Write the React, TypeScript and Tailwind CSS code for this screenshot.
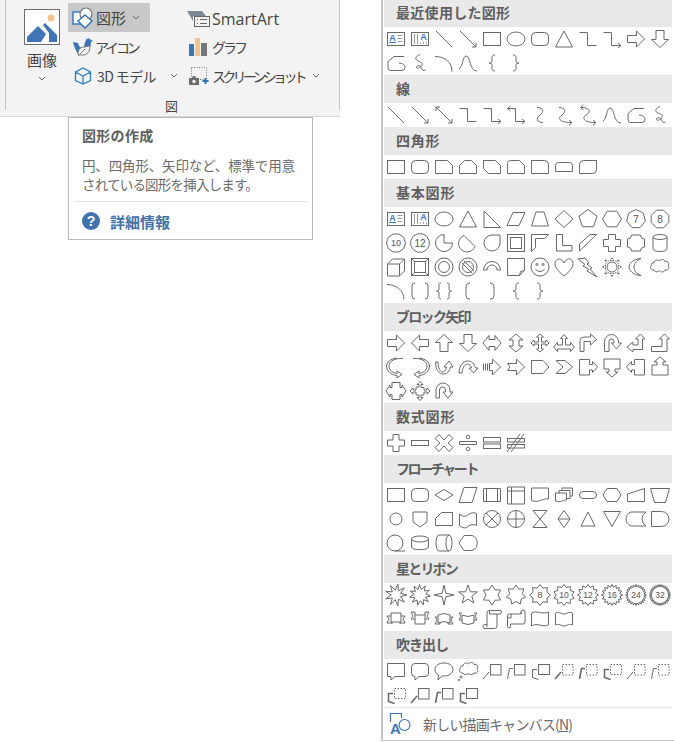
import React from 'react';

const JP = "font-['Noto_Sans_CJK_JP',sans-serif]";

// regular polygon / star outlines for the shape gallery
const regular = (n: number, rx: number, ry = rx, rot = -90) => {
  const pts: string[] = [];
  for (let i = 0; i < n; i++) {
    const a = ((rot + (360 / n) * i) * Math.PI) / 180;
    pts.push(`${(12 + rx * Math.cos(a)).toFixed(1)} ${(12 + ry * Math.sin(a)).toFixed(1)}`);
  }
  return 'M' + pts.join('L') + 'z';
};
const starPath = (n: number, R: number, r: number, rot = -90) => {
  const pts: string[] = [];
  for (let i = 0; i < n * 2; i++) {
    const a = ((rot + (180 / n) * i) * Math.PI) / 180;
    const k = i % 2 === 0 ? R : r;
    pts.push(`${(12 + k * Math.cos(a)).toFixed(1)} ${(12 + k * Math.sin(a)).toFixed(1)}`);
  }
  return 'M' + pts.join('L') + 'z';
};

const Label = ({ t, size = 10, y = 15.5 }: { t: string; size?: number; y?: number }) => (
  <text x="12" y={y} textAnchor="middle" fontSize={size} fill="#555" stroke="none" fontFamily="Liberation Sans">
    {t}
  </text>
);

const lineCallout = (kind: number, dashed: boolean, bar = false) => {
  const dash = dashed ? '1.5 1.5' : undefined;
  if (kind === 3) {
    return (
      <>
        <rect x="10.5" y="5.5" width="11" height="10" strokeDasharray={dash} />
        <path d="M9 10.5H4.5v8l6 2" strokeWidth={bar ? 1.6 : 1} />
      </>
    );
  }
  return (
    <>
      <rect x="10.5" y="5.5" width="10.5" height="10.5" strokeDasharray={dash} />
      {kind === 1 ? (
        <path d="M9 13L3 20" strokeWidth={bar ? 1.6 : 1} />
      ) : (
        <path d="M9 9.5H5.5L3.5 20" strokeWidth={bar ? 1.6 : 1} />
      )}
    </>
  );
};

const p = (d: string) => <path d={d} />;

const shapes: Record<string, React.ReactNode> = {
  textbox: (
    <>
      <rect x="3.5" y="5.5" width="17" height="13" />
      <text x="8.5" y="14" textAnchor="middle" fontSize="9" fontWeight="700" fill="#3a76c4" stroke="none" fontFamily="Liberation Sans">A</text>
      <path d="M5 15.5h7" stroke="#3a76c4" />
      <path d="M13.5 8.5h5M13.5 11.5h5M13.5 14.5h5M5 16.5h0" stroke="#9a9a9a" />
    </>
  ),
  vtextbox: (
    <>
      <rect x="3.5" y="5.5" width="17" height="13" />
      <path d="M6.5 7v10M9.5 7v10" stroke="#9a9a9a" />
      <text x="15.5" y="13" textAnchor="middle" fontSize="9" fontWeight="700" fill="#3a76c4" stroke="none" fontFamily="Liberation Sans">A</text>
      <path d="M12.5 15.5v1.5M15.5 15v2M18.5 15.5v1.5" stroke="#9a9a9a" />
    </>
  ),
  line: p('M4 4L20 20'),
  arrowLine: p('M4 4L20 20M20 16v4h-4'),
  doubleArrow: p('M4 4L20 20M4 8V4h4M20 16v4h-4'),
  rect: <rect x="3.5" y="5.5" width="17" height="13" />,
  ellipse: <ellipse cx="12" cy="12" rx="9" ry="7" />,
  roundRect: <rect x="3.5" y="5.5" width="17" height="13" rx="4" />,
  triangle: p('M12 4L20.5 20H3.5z'),
  elbow: p('M3.5 5.5h8v13h9'),
  elbowArrow: p('M3.5 5.5h8v13h9M18 16l3 2.5-3 2.5'),
  elbowDouble: p('M3.5 5.5h8v13h9M6.5 3l-3 2.5 3 2.5M18 16l3 2.5-3 2.5'),
  curvy: p('M9 4.5c7 0 7 5 3 7.5-4 2.5-4 7.5 3 7.5'),
  curveArrow: p('M7 4.5c7 0 7 5 3 7.5-4 2.5-4 7.5 9 7.5M17 17l3 2.5-3 2.5'),
  curveDouble: p('M5 4.5c10 0 10 5 5 7.5-4 2.5-3 7.5 9 7.5M7.5 2l-3 2.5 3 2.5M17 17l3 2.5-3 2.5'),
  freeform: p('M20 5.5H10L4 10.5v6.5q0 2.5 2.5 2.5H18q3 0 3-3 0-4-6-4.5'),
  scribble: p('M12 3.5C8 5 6 8 10 10c4 1.5 6 3 2.5 6-2 1.5-4 2-4 0s4-2 5 1c.5 2 2 3 4 2'),
  curve: p('M3 5.5c9 0 17 5 17 15'),
  curveS: p('M3 18C7 16 6.5 5 10 5c5 0 3 15 11 15'),
  lbrace: p('M15 4c-3.5 0-3 2-3 5 0 2-.5 3-3 3 2.5 0 3 1 3 3 0 3-.5 5 3 5'),
  rbrace: p('M9 4c3.5 0 3 2 3 5 0 2 .5 3 3 3-2.5 0-3 1-3 3 0 3 .5 5-3 5'),

  snip1: p('M3.5 5.5h12l5 5v8h-17z'),
  snip2: p('M8.5 5.5h7l5 5v8h-17v-8z'),
  snipDiag: p('M3.5 5.5h12l5 5v8h-12l-5-5z'),
  snipRound: p('M6.5 5.5h9l5 5v8h-17v-10q0-3 3-3z'),
  round1: p('M3.5 5.5h13q4 0 4 4v9h-17z'),
  round2: p('M6.5 7.5h11q3 0 3 3v6h-17v-6q0-3 3-3z'),
  roundDiag: p('M7.5 5.5h13v9q0 4-4 4h-13v-9q0-4 4-4z'),

  rtTriangle: p('M4 4l16.5 16.5H4z'),
  parallelogram: p('M9 5.5h12l-6 13H3z'),
  trapezoid: p('M8 5h8l4.5 14h-17z'),
  diamond: p('M12 3.5l9 8.5-9 8.5-9-8.5z'),
  pentagon: p(regular(5, 9.5)),
  hexagon: p(regular(6, 9.5, 9, 0)),
  hept: <>{p(regular(7, 9.5))}<Label t="7" /></>,
  oct: <>{p(regular(8, 9.5, 9.5, -67.5))}<Label t="8" /></>,
  dec: <>{p(regular(10, 9.5, 9.5, -72))}<Label t="10" size={9} y={15} /></>,
  dodec: <>{p(regular(12, 9.5, 9.5, -75))}<Label t="12" size={10} /></>,
  pie: p('M12 3.5a8.5 8.5 0 1 0 8.5 8.5H12z'),
  chord: p('M8 4.5a8.5 8.5 0 1 0 11 11z'),
  teardrop: p('M20 4v8a8 8 0 1 1-8-8z'),
  frame: <><rect x="3.5" y="3.5" width="17" height="17" /><rect x="6.5" y="6.5" width="11" height="11" /></>,
  halfFrame: p('M3.5 3.5h17l-4 4h-9v9l-4 4z'),
  lShape: p('M4.5 3.5h6v11h9.5v5.5H4.5z'),
  diagStripe: p('M3.5 13L14 3.5h6.5L3.5 20z'),
  plus: p('M8.5 3.5h7v5h5v7h-5v5h-7v-5h-5v-7h5z'),
  plaque: p('M7.5 4h9q0 4 4 4v8q-4 0-4 4h-9q0-4-4-4V8q4 0 4-4z'),
  can: <><ellipse cx="12" cy="6" rx="7" ry="2.5" /><path d="M5 6v12c0 3.3 14 3.3 14 0V6" /></>,
  cube: p('M3.5 9l5-5h12v12l-5 5h-12zM3.5 9h12v12M15.5 9l5-5'),
  bevel: <><rect x="3.5" y="3.5" width="17" height="17" /><rect x="6.5" y="6.5" width="11" height="11" /><path d="M3.5 3.5l3 3M20.5 3.5l-3 3M3.5 20.5l3-3M20.5 20.5l-3-3" /></>,
  donut: <><circle cx="12" cy="12" r="9" /><circle cx="12" cy="12" r="5.5" /></>,
  noSymbol: <><circle cx="12" cy="12" r="9" /><circle cx="12" cy="12" r="5.5" /><path d="M8 6l10 10M6 8l10 10" /></>,
  blockArc: p('M3.5 15a8.5 8.5 0 0 1 17 0h-3.5a5 5 0 0 0-10 0z'),
  folded: p('M3.5 3.5h17v12l-5 5h-12zM15.5 20.5l1-4 4-1'),
  smiley: <><circle cx="12" cy="12" r="9" /><circle cx="9" cy="9.5" r="1" /><circle cx="15" cy="9.5" r="1" /><path d="M7.5 14.5q4.5 4 9 0" /></>,
  heart: p('M12 21C6 16 3 13 3 8.5 3 5 7 3 9 4.5c1.5 1 2.5 2 3 3.5.5-1.5 1.5-2.5 3-3.5 2-1.5 6-.5 6 4 0 4.5-3 7.5-9 12.5z'),
  lightning: p('M2 4l7-1 4 5-2 1 5 4-2 1 7 8-10-6 2-1.5-6-3.5 2-1.5z'),
  sun: <><circle cx="12" cy="12" r="5" /><path d="M12 2.5l2 3h-4zM12 21.5l2-3h-4zM2.5 12l3 2v-4zM21.5 12l-3 2v-4zM5 5l3.5 1-2.5 2.5zM19 5l-3.5 1 2.5 2.5zM5 19l3.5-1-2.5-2.5zM19 19l-3.5-1 2.5-2.5z" strokeDasharray="2 1" /></>,
  moon: p('M17 3.5c-9 .5-12 6-12 8.5s3 8 12 8.5c-5-2-7-5-7-8.5s2-6.5 7-8.5z'),
  cloud: p('M6 8c0-3 4-4 5.5-2 1-2 5-2 5.5.5 3-.5 5 2 3 4.500 2 2 0 5-3 4-1 2.500-4 2.500-5.500.500-1.500 2-5 1.500-5.500-.500-3 .500-4.500-3-2.500-4.500C2.500 9 4 7.500 6 8z'),
  arc: p('M3 5.5c9 0 17 6 17 15'),
  bracketPair: p('M7 4q-3 0-3 3v10q0 3 3 3M17 4q3 0 3 3v10q0 3-3 3'),
  bracePair: p('M9 4c-3 0-2 2-2 5 0 2-.5 3-2.5 3 2 0 2.5 1 2.5 3 0 3-1 5 2 5M15 4c3 0 2 2 2 5 0 2 .5 3 2.5 3-2 0-2.5 1-2.5 3 0 3 1 5-2 5'),
  lbracket: p('M14 4q-4 0-4 3v10q0 3 4 3'),
  rbracket: p('M10 4q4 0 4 3v10q0 3-4 3'),

  right: p('M3.5 8.5h9V4l8 8-8 8v-4.5h-9z'),
  left: p('M20.5 8.5h-9V4l-8 8 8 8v-4.5h9z'),
  up: p('M8 20.5v-9H3.5l8.5-8 8.5 8H16v9z'),
  down: p('M8 3.5v9H3.5l8.5 8 8.5-8H16v-9z'),
  leftRight: p('M3 12l6-7.500v4h6v-4l6 7.500-6 7.500v-4H9v4z'),
  upDown: p('M12 3l7 6h-4v6h4l-7 6-7-6h4V9H5z'),
  quad: p('M12 3l3.500 3H13.500v5H18V9l3 3-3 3v-2h-4.500v5h2L12 21l-3.500-3h2v-5H6v2l-3-3 3-3v2h4.500V6h-2z'),
  lrUp: p('M12 3.5l3.5 4H13.5v6.5h5V11.5l4 4.5-4 4.5V18h-13v2.500l-4-4.500 4-4.500V14h5V7.500H8.500z'),
  bent: p('M4 20.5V9.5q0-3.500 4-3.500h6.500V3l6 5.500-6 5.500v-3.500H8v10z'),
  uturn: p('M4.5 20.5V10.500a7 7 0 0 1 14 0v1.500H21.500l-5 6-5-6h2.500v-1.500a2.500 2.500 0 0 0-5 0v10z'),
  leftUp: p('M16.5 3l4.500 5h-2.500v10.500H9V21l-6-5 6-5v3h5V8h-2.500z'),
  bentUp: p('M3.5 15.5H14V8h-2.500L16.500 3l5 5H19v12.500H3.500z'),
  curvedRight: p('M19 3.500C11 3 5 6 5 11c0 4 3 6.500 8 7.500V16l5 3.500-5 3.500v-2.500C7 20 2.500 16 2.500 11 2.500 7 7 3.500 13 3'),
  curvedLeft: p('M5 3.500C13 3 19 6 19 11c0 4-3 6.500-8 7.500V16l-5 3.500 5 3.500v-2.500c6-.500 10.500-4.500 10.500-9.500C21.500 7 17 3.500 11 3'),
  curvedUp: p('M3.500 7c0 7 3 12 8 12 4 0 6-3 7-7h2.500L17 6l-5 6h2.500c-.500 3-2 5-4 5S6 13 6 7z'),
  curvedDown: p('M3 18C3 11 7 6 12 6c4 0 6.500 3 7.500 7H22l-4.500 5-4.500-5h2.500c-.500-2-2-4-4-4-3 0-5 4-5.500 9z'),
  striped: p('M3.500 8.500v7M5.500 8.500v7M7.500 8.500v7M9.500 8.500h3V4l8 8-8 8v-4.500h-3z'),
  notched: p('M3.500 8.500h9V4l8 8-8 8v-4.500h-9l2.500-3.500z'),
  homePlate: p('M3.500 5.500H15l6 6.500-6 6.500H3.500z'),
  chevron: p('M4 5.500h9l7.500 6.500-7.500 6.500H4l7-6.500z'),
  rightCallout: p('M3.500 4.500h10v5h3V6.500l5 5.500-5 5.500V15h-3v5H3.500z'),
  downCallout: p('M4 4h16v10h-5v3h3l-6 5-6-5h3v-3H4z'),
  leftCallout: p('M20.500 4.500h-10v5h-3V6.500l-5 5.500 5 5.500V15h3v5h10z'),
  upCallout: p('M4 20h16V10h-5V7h3l-6-5-6 5h3v3H4z'),
  lrCallout: p('M8 3.500h8v5h2V6l4 6-4 6v-2.500h-2v5H8v-5H6V18l-4-6 4-6v2.500h2z'),
  quadCallout: p('M12 2.500l3 3h-2v3h3v2.500h3V9l3 3-3 3v-2h-3v3h-3v2.500h2L12 21.500 9 18.500h2V16H8v-3H5v2l-3-3 3-3v2h3V8h3V5.500H9z'),
  circular: p('M4 19V11a7 7 0 0 1 14 0v2h3l-5 6-5-6h2.500V11a3 3 0 0 0-6 0v8z'),

  mathPlus: p('M9 3.500h6V9h5.500v6H15v5.500H9V15H3.500V9H9z'),
  mathMinus: <rect x="3.500" y="9.500" width="17" height="5" />,
  mathMul: p('M7 3.500l5 5.500 5-5.500 4 4-5 4.500 5 4.500-4 4-5-5.500-5 5.500-4-4 5-4.500-5-4.500z'),
  mathDiv: <><path d="M3.500 10.500h17v3h-17z" /><circle cx="12" cy="6" r="1.800" /><circle cx="12" cy="18" r="1.800" /></>,
  mathEq: <><rect x="3.500" y="6.500" width="17" height="4.500" /><rect x="3.500" y="13" width="17" height="4.500" /></>,
  mathNe: <><rect x="3.500" y="7.500" width="17" height="3.500" /><rect x="3.500" y="13.500" width="17" height="3.500" /><path d="M3 21L16 3M7 21L20 3" /></>,

  diamondWide: p('M3 12l9-5.500 9 5.500-9 5.500z'),
  data: p('M8 4.500h13l-5 15H3z'),
  predefined: p('M3.500 5.500h17v13h-17zM6.500 5.500v13M17.500 5.500v13'),
  internal: p('M3.500 4h17v17h-17zM3.500 8h17M7.500 4v17'),
  document: p('M3.500 5h17v11c-6-1-10 4.500-17 1.500z'),
  multidoc: p('M3.500 10h11v7c-4 0-6 3-11 1zM7 10V7.500h11v8h-3.500M10 7.500V5h10.500v8H18'),
  terminator: <rect x="3.500" y="8.500" width="17" height="7" rx="3.500" />,
  preparation: p('M7 5.500h10l4 6.500-4 6.500H7l-4-6.500z'),
  manualInput: p('M3.500 11l17-5.500v13h-17z'),
  manualOp: p('M2.500 5.500h19l-4 14h-11z'),
  connector: <circle cx="12" cy="12" r="6" />,
  offpage: p('M5 5h14v10l-7 5-7-5z'),
  card: p('M9.500 5.500h11v13h-17v-7z'),
  tape: p('M3.500 7c4 3 6 3 8.500 1s5-3 8.500-1.500v12c-3-1.500-6-1-8.500 1s-5 2-8.500-1z'),
  summing: <><circle cx="12" cy="12" r="8.500" /><path d="M6 6l12 12M18 6L6 18" /></>,
  orShape: <><circle cx="12" cy="12" r="8.500" /><path d="M12 3.500v17M3.500 12h17" /></>,
  collate: p('M5 3.500h14L5 20.500h14z'),
  sortShape: p('M12 3.500l6 8.500-6 8.500-6-8.500zM6 12h12'),
  extract: p('M12 5l7 14H5z'),
  merge: p('M3.500 4.500h17l-8.500 15z'),
  stored: p('M7 5h15q-4 3-4 7t4 7H7q-5-2-5-7t5-7z'),
  delay: p('M3.500 4.500h10a7.500 7.500 0 0 1 0 15h-10z'),
  sequential: <><circle cx="11" cy="12" r="8" /><path d="M11 20h10" /></>,
  disk: <><ellipse cx="12" cy="8" rx="8.500" ry="3" /><path d="M3.500 8v8c0 3.500 17 3.500 17 0V8" /></>,
  direct: <><path d="M7 4h10c4 0 4 16 0 16H7c-4 0-4-16 0-16z" /><path d="M17 4c-4 0-4 16 0 16" /></>,
  displayShape: p('M8 4.500h8c7 2 7 13 0 15H8L3 12z'),

  exp1: p(starPath(9, 11, 4.800, -80)),
  exp2: p(starPath(11, 10.500, 5.800, -60)),
  star4: p(starPath(4, 10, 2.500)),
  star5: p(starPath(5, 10, 4)),
  star6: p(starPath(6, 10, 6)),
  star7: p(starPath(7, 10, 6.500)),
  star8: <>{p(starPath(8, 10.500, 7.500))}<Label t="8" size={9} y={15} /></>,
  star10: <>{p(starPath(10, 10.500, 7.800))}<Label t="10" size={8.500} y={15} /></>,
  star12: <>{p(starPath(12, 10.500, 7.800))}<Label t="12" size={8.500} y={15} /></>,
  star16: <>{p(starPath(16, 10.500, 7.800))}<Label t="16" size={8.500} y={15} /></>,
  star24: <>{p(starPath(24, 10.500, 8))}<Label t="24" size={8.500} y={15} /></>,
  star32: <>{p(starPath(32, 10.500, 8))}<Label t="32" size={8.500} y={15} /></>,
  ribbonUp: p('M7 6h10v9H7zM7 9H3l2 3-2 4h5M17 9h4l-2 3 2 4h-5M8 15v2M16 15v2'),
  ribbonDown: p('M7 8h10v9H7zM7 5H3l2 4-2 3h4M17 5h4l-2 4 2 3h-4M7 5v3M17 5v3'),
  curveUp: p('M6 8q6-3 12 0v8q-6-3-12 0zM6 10H3l2 3-2 4h5v-2M18 10h3l-2 3 2 4h-5v-2'),
  curveDown: p('M6 8q6 3 12 0v8q-6 3-12 0zM6 6H3l2 3-2 4h3M18 6h3l-2 3 2 4h-3'),
  vscroll: p('M7 20V6q0-2.500 2.500-2.500H20q1.500 0 1.500 1.500T20 7h-3v12q0 2.500-2.500 2.500H5q-2 0-2-2t2-2h2M9.500 3.500V7H17'),
  hscroll: p('M3.500 9q0-2 2-2H17V5q0-2 2-2t2 2v10q0 2-2 2H6.500v2q0 2-1.500 2t-1.500-2zM3.500 9q0 2 2 2h1.500V7M17 5v2'),
  wave: p('M3.500 6c5-3 11 2 17-1v13c-6 3-11-3-17 1z'),
  doubleWave: p('M3.500 6c3-2 5.500 1 8.500 1s5-3 8.500-1v12c-3-2-5.500 1-8.500 1s-5-3-8.500-1z'),

  rectCallout: p('M3.500 4.500h17v13H11l-4 3.500v-3.500H3.500z'),
  roundCallout: p('M7 4.500h10q3.500 0 3.500 3.500v6q0 3.500-3.500 3.500h-6l-4 3.500v-3.500q-3.500 0-3.500-3.500V8q0-3.500 3.500-3.500z'),
  ovalCallout: p('M12 4c5 0 9 2.500 9 6.500S17 17 12 17q-1 0-2-.200L6 21l.500-5C4 15 3 13 3 10.500 3 6.500 7 4 12 4z'),
  cloudCallout: (
    <>
      <path d="M7 7c0-3 4-4 5.500-2 1-2 5-2 5.500.500 3-.500 5 2 3 4.500 2 2 0 5-3 4-1 2-4 2-5.500.500-1.500 1.500-5 1.500-5.500-.500-3 .500-4.500-3-2.500-4.500C3.500 8 5 6.500 7 7z" />
      <circle cx="5" cy="18" r="1" />
      <circle cx="3" cy="21" r=".7" />
    </>
  ),
  lc1: lineCallout(1, false),
  lc2: lineCallout(2, false),
  lc3: lineCallout(3, false),
  dc1: lineCallout(1, true, true),
  dc2: lineCallout(2, true, true),
  dc3: lineCallout(3, true, true),
  dn1: lineCallout(1, true),
  dn2: lineCallout(2, true),
  bc1: lineCallout(1, false, true),
  bc2: lineCallout(2, false, true),
  bc3: lineCallout(3, false, true),
};

const sections = [
  {
    title: '最近使用した図形',
    track: 'tracking-[0.3px]',
    items: ['textbox', 'vtextbox', 'line', 'arrowLine', 'rect', 'ellipse', 'roundRect', 'triangle', 'elbow', 'elbowArrow', 'right', 'down', 'freeform', 'scribble', 'curve', 'curveS', 'lbrace', 'rbrace'],
    first: true,
  },
  {
    title: '線',
    track: 'tracking-[0.5px]',
    items: ['line', 'arrowLine', 'doubleArrow', 'elbow', 'elbowArrow', 'elbowDouble', 'curvy', 'curveArrow', 'curveDouble', 'curveS', 'freeform', 'scribble'],
  },
  {
    title: '四角形',
    track: 'tracking-[0.8px]',
    items: ['rect', 'roundRect', 'snip1', 'snip2', 'snipDiag', 'snipRound', 'round1', 'round2', 'roundDiag'],
  },
  {
    title: '基本図形',
    track: 'tracking-[0.8px]',
    items: [
      'textbox', 'vtextbox', 'ellipse', 'triangle', 'rtTriangle', 'parallelogram', 'trapezoid', 'diamond', 'pentagon', 'hexagon', 'hept', 'oct',
      'dec', 'dodec', 'pie', 'chord', 'teardrop', 'frame', 'halfFrame', 'lShape', 'diagStripe', 'plus', 'plaque', 'can',
      'cube', 'bevel', 'donut', 'noSymbol', 'blockArc', 'folded', 'smiley', 'heart', 'lightning', 'sun', 'moon', 'cloud',
      'arc', 'bracketPair', 'bracePair', 'lbracket', 'rbracket', 'lbrace', 'rbrace',
    ],
  },
  {
    title: 'ブロック矢印',
    track: 'tracking-[-1.7px]',
    items: [
      'right', 'left', 'up', 'down', 'leftRight', 'upDown', 'quad', 'lrUp', 'bent', 'uturn', 'leftUp', 'bentUp',
      'curvedRight', 'curvedLeft', 'curvedUp', 'curvedDown', 'striped', 'notched', 'homePlate', 'chevron', 'rightCallout', 'downCallout', 'leftCallout', 'upCallout',
      'lrCallout', 'quadCallout', 'circular',
    ],
  },
  {
    title: '数式図形',
    track: 'tracking-[0.8px]',
    items: ['mathPlus', 'mathMinus', 'mathMul', 'mathDiv', 'mathEq', 'mathNe'],
  },
  {
    title: 'フローチャート',
    track: 'tracking-[-2.4px]',
    items: [
      'rect', 'roundRect', 'diamondWide', 'data', 'predefined', 'internal', 'document', 'multidoc', 'terminator', 'preparation', 'manualInput', 'manualOp',
      'connector', 'offpage', 'card', 'tape', 'summing', 'orShape', 'collate', 'sortShape', 'extract', 'merge', 'stored', 'delay',
      'sequential', 'disk', 'direct', 'displayShape',
    ],
  },
  {
    title: '星とリボン',
    track: 'tracking-[-1.8px]',
    items: [
      'exp1', 'exp2', 'star4', 'star5', 'star6', 'star7', 'star8', 'star10', 'star12', 'star16', 'star24', 'star32',
      'ribbonUp', 'ribbonDown', 'curveUp', 'curveDown', 'vscroll', 'hscroll', 'wave', 'doubleWave',
    ],
  },
  {
    title: '吹き出し',
    track: 'tracking-[-1px]',
    items: [
      'rectCallout', 'roundCallout', 'ovalCallout', 'cloudCallout', 'lc1', 'lc2', 'lc3', 'dc1', 'dc2', 'dc3', 'dn1', 'dn2',
      'dc3', 'bc1', 'bc2', 'bc3',
    ],
  },
];

function ShapeSection({ title, track, items, first }: { title: string; track: string; items: string[]; first?: boolean }) {
  return (
    <div>
      <div className={`${first ? 'h-[27px]' : 'h-[28px]'} ${track} mr-[2px] bg-[#e9e9e9] pl-3 pb-[3px] flex items-center text-[14px] leading-none font-bold text-[#5e5e5e]`}>
        {title}
      </div>
      <div className="grid grid-cols-[repeat(12,24px)] auto-rows-[24px]">
        {items.map((name, i) => (
          <svg key={i} width="24" height="24" viewBox="0 0 24 24" fill="none" stroke="#696969" strokeWidth="1">
            {shapes[name]}
          </svg>
        ))}
      </div>
    </div>
  );
}

const Chevron = () => (
  <svg width="8" height="5" viewBox="0 0 8 5" fill="none" stroke="#666" strokeWidth="1" className="shrink-0">
    <path d="M1 1l3 3 3-3" />
  </svg>
);

function PictureIcon() {
  return (
    <svg width="36" height="36" viewBox="0 0 36 36" className="shrink-0">
      <rect x=".5" y=".5" width="35" height="35" fill="#fff" stroke="#6b6b6b" />
      <circle cx="27" cy="9" r="3.5" fill="#f2c48d" />
      <path d="M3 33V28L14 17l8 8-5 8z" fill="#3f75b5" />
      <path d="M19 16l2-2 12 12v7h-8V24z" fill="#3f75b5" />
    </svg>
  );
}

function ShapesIcon() {
  return (
    <svg width="22" height="22" viewBox="0 0 22 22" fill="none" className="shrink-0">
      <rect x="1" y="5" width="13" height="12" stroke="#2f73b8" strokeWidth="1.4" fill="#fff" />
      <circle cx="14" cy="7" r="6" fill="#fff" stroke="#777" strokeWidth="1.2" />
      <path d="M13 8l7 6-7 7-7-7z" fill="#fff" stroke="#2f73b8" strokeWidth="1.4" />
    </svg>
  );
}

function BirdIcon() {
  return (
    <svg width="20" height="21" viewBox="0 0 20 21" fill="none" className="shrink-0">
      <path d="M0 6l5 1c1 4 3 5 5 5 2-2 1-5 3-8 1-2 4-2 5 0l2 1-2 1c0 5-2 7-5 8l-4 2H6l-1 2C3 15 1 11 0 6z" fill="#3f75b5" />
      <path d="M5 18c0-5 3-7 6-7l6-1c0 6-3 9-7 9-2 0-4 0-5-1zM5 20l7-7" fill="#f3f3f3" stroke="#777" strokeWidth="1" />
    </svg>
  );
}

function CubeIcon() {
  return (
    <svg width="18" height="18" viewBox="0 0 18 18" fill="none" stroke="#2f7fc4" strokeWidth="1.3" className="shrink-0">
      <path d="M9 1l7.5 4v8.5L9 17l-7.5-3.5V5zM1.5 5L9 9l7.500-4M9 9v8" />
    </svg>
  );
}

function SmartArtIcon() {
  return (
    <svg width="23" height="16" viewBox="0 0 23 16" className="shrink-0">
      <path d="M0 0h15l4 5H6v5z" fill="#7d8a96" />
      <rect x="7.5" y="5.5" width="15" height="10" fill="#f3f3f3" stroke="#666" />
      <path d="M10 8.5h1M13 8.5h7M10 12.5h1M13 12.5h7" stroke="#666" />
    </svg>
  );
}

function ChartIcon() {
  return (
    <svg width="18" height="18" viewBox="0 0 18 18" className="shrink-0">
      <rect x="0" y="6" width="5" height="12" fill="#3f75b5" />
      <rect x="6" y="0" width="5" height="18" fill="#efc490" />
      <rect x="12" y="5" width="6" height="13" fill="#777" />
    </svg>
  );
}

function ScreenshotIcon() {
  return (
    <svg width="20" height="18" viewBox="0 0 20 18" fill="none" className="shrink-0">
      <rect x="2.5" y=".5" width="15" height="12" stroke="#777" strokeDasharray="1 1.5" />
      <rect x="0" y="11" width="10" height="7" fill="#6b6b6b" />
      <path d="M3 11l1-2h2l1 2" fill="#6b6b6b" />
      <circle cx="5" cy="14.5" r="1.8" fill="#f3f3f3" />
      <path d="M16.5 11v6M13.5 14h6" stroke="#2f73b8" strokeWidth="2" />
    </svg>
  );
}

function CanvasIcon() {
  return (
    <svg width="22" height="24" viewBox="0 0 22 24" fill="none" className="shrink-0">
      <path d="M1.5 10V1.500h11V6" stroke="#3f75b5" strokeWidth="1.2" />
      <circle cx="15.5" cy="13" r="5.5" stroke="#3f75b5" strokeWidth="1.2" />
      <text x="6.5" y="22" textAnchor="middle" fontSize="15" fontWeight="700" fill="#3f75b5" fontFamily="Liberation Sans">A</text>
    </svg>
  );
}

function Ribbon() {
  return (
    <div className="w-[340px] h-[117px] bg-[#f3f3f3] border-b border-[#d6d6d6] flex flex-col">
      <div className="flex h-[110px] ml-[5px] border-l border-r border-[#c4c4c4]">
        <div className="flex flex-1">
          <div className="w-[36px] ml-[18px] mt-[9px] flex flex-col items-center shrink-0">
            <PictureIcon />
            <div className={`${JP} mt-[4px] text-[15px] leading-[22px] text-[#444]`}>画像</div>
            <div className="mt-[5px]"><Chevron /></div>
          </div>
          <div className="ml-[8px] w-[112px] mt-[3px] flex flex-col shrink-0">
            <div className="h-[29px] w-[82px] bg-[#c8c8c8] flex items-center pl-[4px]">
              <ShapesIcon />
              <span className={`${JP} ml-[2px] text-[15px] leading-none text-[#444]`}>図形</span>
              <span className="ml-[6px]"><Chevron /></span>
            </div>
            <div className="h-[29px] flex items-center pl-[5px]">
              <BirdIcon />
              <span className={`${JP} ml-[2px] text-[14px] leading-none tracking-[-3.2px] text-[#444]`}>アイコン</span>
            </div>
            <div className="h-[29px] flex items-center pl-[6px]">
              <CubeIcon />
              <span className={`${JP} ml-[5px] text-[14px] leading-none tracking-[-0.6px] text-[#444]`}>3D モデル</span>
              <span className="ml-[14px]"><Chevron /></span>
            </div>
          </div>
          <div className="ml-[7px] mt-[3px] flex flex-col">
            <div className="h-[29px] flex items-center pt-[2px]">
              <SmartArtIcon />
              <span className="ml-[2px] font-['Open_Sans',sans-serif] text-[16px] leading-none text-[#444]">SmartArt</span>
            </div>
            <div className="h-[29px] flex items-center pl-[2px]">
              <ChartIcon />
              <span className={`${JP} ml-[5px] text-[14px] leading-none tracking-[-3px] text-[#444]`}>グラフ</span>
            </div>
            <div className="h-[29px] flex items-center pl-[2px]">
              <ScreenshotIcon />
              <span className={`${JP} ml-[3px] text-[14px] leading-none tracking-[-3.7px] text-[#444] whitespace-nowrap`}>スクリーンショット</span>
              <span className="ml-[8px]"><Chevron /></span>
            </div>
          </div>
        </div>
      </div>
      <div className={`${JP} -mt-[12px] ml-[165px] text-[13px] leading-[16px] text-[#444]`}>図</div>
    </div>
  );
}

function Tooltip() {
  return (
    <div className={`${JP} ml-[68px] w-[245px] h-[123px] border border-[#b9b9b9] bg-white`}>
      <div className="ml-[13px] mt-[7px] text-[14px] leading-[20px] font-bold tracking-[0.3px] text-[#5e5e5e]">図形の作成</div>
      <div className="ml-[13px] mt-[11px] w-[224px] text-[13.5px] leading-[19px] text-[#6b6b6b]">
        <div className="tracking-[-0.15px]">円、四角形、矢印など、標準で用意</div>
        <div className="tracking-[-0.8px]">されている図形を挿入します。</div>
      </div>
      <div className="mx-[5px] mt-[7px] border-t border-[#e2e2e2]" />
      <div className="ml-[13px] mt-[10px] flex items-center">
        <svg width="18" height="18" viewBox="0 0 18 18" className="shrink-0">
          <circle cx="9" cy="9" r="9" fill="#3f74ae" />
          <text x="9" y="14" textAnchor="middle" fontSize="14" fontWeight="700" fill="#fff" fontFamily="Liberation Sans">?</text>
        </svg>
        <span className="ml-[10px] text-[15px] leading-none font-bold text-[#4472a8]">詳細情報</span>
      </div>
    </div>
  );
}

export default function App() {
  return (
    <div className="w-[674px] h-[742px] bg-white flex overflow-hidden">
      <div className="w-[381px] shrink-0">
        <Ribbon />
        <Tooltip />
      </div>
      <div className={`${JP} flex-1 h-[741px] border-l-2 border-b border-[#c6c6c6] pl-px`}>
        {sections.map((s) => (
          <ShapeSection key={s.title} title={s.title} track={s.track} items={s.items} first={s.first} />
        ))}
        <div className="mr-[2px] border-t border-[#e2e2e2] flex items-center h-[33px] pl-[5px]">
          <CanvasIcon />
          <span className="ml-[12px] text-[14px] leading-none tracking-[-0.8px] text-[#6b6b6b]">
            新しい描画キャンバス(<span className="underline">N</span>)
          </span>
        </div>
      </div>
    </div>
  );
}
